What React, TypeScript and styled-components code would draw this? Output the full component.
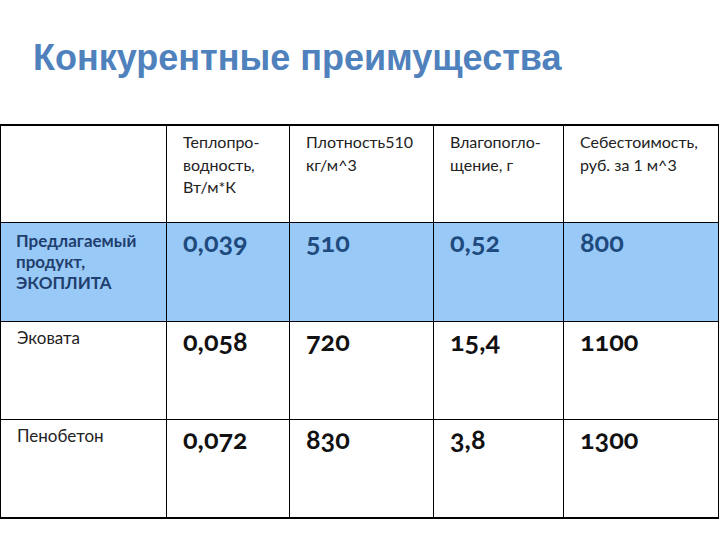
import React from "react";
import styled, { createGlobalStyle } from "styled-components";

const Global = createGlobalStyle`
  html, body { margin: 0; padding: 0; background: #ffffff; }
  body { width: 720px; height: 540px; overflow: hidden; }
`;

const Page = styled.div`
  width: 720px;
  height: 540px;
  display: flex;
  flex-direction: column;
  background: #fff;
`;

const Title = styled.h1`
  margin: 0;
  padding: 38px 0 0 33px;
  height: 124px;
  box-sizing: border-box;
  font-family: "Liberation Sans", Arial, sans-serif;
  font-weight: bold;
  font-size: 36px;
  line-height: 40px;
  color: #4f81bd;
`;

const Table = styled.div`
  display: grid;
  grid-template-columns: 166px 123px 144px 130px 155px;
  grid-template-rows: 97px 99px 98px 97px;
  width: 718px;
  border-top: 2px solid #000;
  border-bottom: 2px solid #000;
  border-left: 1px solid #000;
  box-sizing: content-box;
`;

const Cell = styled.div<{ $hl?: boolean; $lastRow?: boolean }>`
  box-sizing: border-box;
  border-right: 1px solid #000;
  border-bottom: ${(p) => (p.$lastRow ? "none" : "1px solid #000")};
  background: ${(p) => (p.$hl ? "#99c9f7" : "#fff")};
  padding: 0 8px 0 16px;
  overflow: hidden;
`;

const HeadText = styled.div`
  font-family: "Lato", "Open Sans", sans-serif;
  font-size: 16px;
  line-height: 22.5px;
  color: #222;
  padding-top: 5px;
`;

const Label = styled.div<{ $hl?: boolean }>`
  font-family: "Lato", "Open Sans", sans-serif;
  font-weight: ${(p) => (p.$hl ? 700 : 400)};
  font-size: 17px;
  line-height: 21px;
  color: ${(p) => (p.$hl ? "#1f3f6e" : "#222")};
  padding-top: ${(p) => (p.$hl ? 7 : 5)}px;
  margin-left: ${(p) => (p.$hl ? -1 : 0)}px;
`;

const Num = styled.div<{ $hl?: boolean }>`
  font-family: "Lato", "Open Sans", sans-serif;
  font-variant-numeric: oldstyle-nums;
  font-weight: 700;
  font-size: 27px;
  line-height: 30px;
  color: ${(p) => (p.$hl ? "#1f4a7e" : "#111")};
  padding-top: 4px;
`;

const headerLines: string[][] = [
  [],
  ["Теплопро-", "водность,", "Вт/м*К"],
  ["Плотность510", "кг/м^3"],
  ["Влагопогло-", "щение, г"],
  ["Себестоимость,", "руб. за 1 м^3"],
];

const rows = [
  { label: ["Предлагаемый", "продукт,", "ЭКОПЛИТА"], vals: ["0,039", "510", "0,52", "800"], hl: true },
  { label: ["Эковата"], vals: ["0,058", "720", "15,4", "1100"], hl: false },
  { label: ["Пенобетон"], vals: ["0,072", "830", "3,8", "1300"], hl: false },
];

export default function App() {
  return (
    <Page>
      <Global />
      <Title>Конкурентные преимущества</Title>
      <Table>
        {headerLines.map((lines, i) => (
          <Cell key={"h" + i}>
            <HeadText>
              {lines.map((l, j) => (
                <div key={j}>{l}</div>
              ))}
            </HeadText>
          </Cell>
        ))}
        {rows.map((r, ri) => (
          <React.Fragment key={ri}>
            <Cell $hl={r.hl} $lastRow={ri === rows.length - 1}>
              <Label $hl={r.hl}>
                {r.label.map((l, j) => (
                  <div key={j}>{l}</div>
                ))}
              </Label>
            </Cell>
            {r.vals.map((v, vi) => (
              <Cell key={vi} $hl={r.hl} $lastRow={ri === rows.length - 1}>
                <Num $hl={r.hl}>{v}</Num>
              </Cell>
            ))}
          </React.Fragment>
        ))}
      </Table>
    </Page>
  );
}
